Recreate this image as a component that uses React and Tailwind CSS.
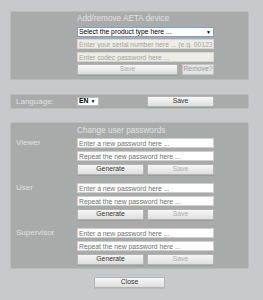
import React from "react";

const font = { fontFamily: '"Liberation Sans", Arial, sans-serif' };

function Btn({ children, disabled, className = "" }) {
  return (
    <div
      className={`flex items-center justify-center h-[11px] border border-[#b4b4b4] rounded-[1px] bg-gradient-to-b from-[#f7f7f7] to-[#dedede] text-[6.8px] leading-none shadow-[0_1px_0_rgba(0,0,0,0.08)] ${
        disabled ? "text-[#adadad]" : "text-[#333]"
      } ${className}`}
    >
      {children}
    </div>
  );
}

function Field({ placeholder, disabled }) {
  return (
    <input
      readOnly
      placeholder={placeholder}
      className={`block w-[137px] h-[10px] px-[1px] text-[6.8px] leading-none outline-none border ${
        disabled
          ? "bg-[#edece5] border-[#d6d5ce] placeholder:text-[#a4a4a0]"
          : "bg-white border-[#cfcfcf] placeholder:text-[#707070]"
      }`}
      style={font}
    />
  );
}

function UserBlock({ label, className = "" }) {
  return (
    <div className={`flex ${className}`}>
      <div className="w-[61px] h-[10px] flex items-center text-[8px] font-normal text-[#e0e0e0]">{label}</div>
      <div className="flex flex-col">
        <Field placeholder="Enter a new password here ..." />
        <div className="mt-[3px]">
          <Field placeholder="Repeat the new password here ..." />
        </div>
        <div className="mt-[3px] flex gap-[3px]">
          <Btn className="w-[67px] h-[10px]">Generate</Btn>
          <Btn className="w-[67px] h-[10px]" disabled>
            Save
          </Btn>
        </div>
      </div>
    </div>
  );
}

export default function App() {
  return (
    <div className="w-[263px] h-[300px] bg-[#c8c9cb] pt-[11px] overflow-hidden" style={font}>
      {/* Panel 1 */}
      <div className="ml-[10px] w-[239px] h-[69px] rounded-[2px] border border-[#b9baba] bg-[#a9abab] pl-[66px]">
        <div className="h-[13px] leading-[13px] text-[8.2px] text-[#e2e2e2]">Add/remove AETA device</div>
        <div className="mt-[2px] w-[137px] h-[10px] bg-white border border-[#7f9fd8] flex items-center justify-between px-[1px] text-[6.8px] text-black leading-none">
          <span>Select the product type here ...</span>
          <span className="text-[5px] mr-[1px]">▼</span>
        </div>
        <div className="mt-[2px]">
          <Field placeholder="Enter your serial number here ... (e.g. 0012345)" disabled />
        </div>
        <div className="mt-[3px]">
          <Field placeholder="Enter codec password here ..." disabled />
        </div>
        <div className="mt-[2px] flex gap-[4px]">
          <Btn className="w-[101px]" disabled>
            Save
          </Btn>
          <div className="w-[32px] h-[11px] flex items-center justify-center border border-[#c4c4c4] bg-[#e4e4e4] text-[6.8px] text-[#9a9a9a] leading-none">
            Remove?
          </div>
        </div>
      </div>

      {/* Panel 2 */}
      <div className="mt-[14px] ml-[10px] w-[239px] h-[15px] rounded-[2px] border border-[#b9baba] bg-[#a9abab] pl-[5px] flex items-center">
        <div className="w-[61px] text-[8px] font-normal text-[#e0e0e0] leading-none">Language:</div>
        <div className="w-[22px] h-[9px] bg-white border border-[#bdbdbd] flex items-center px-[1px] text-[6.8px] text-black leading-none font-bold">
          <span>EN</span>
          <span className="ml-[2px] text-[5px] font-normal">▼</span>
        </div>
        <Btn className="ml-[48px] w-[67px] h-[10px]">Save</Btn>
      </div>

      {/* Panel 3 */}
      <div className="mt-[13px] ml-[10px] w-[239px] h-[147px] rounded-[2px] border border-[#b9baba] bg-[#a9abab] pl-[5px]">
        <div className="ml-[61px] h-[15px] leading-[15px] text-[8.2px] text-[#e2e2e2]">Change user passwords</div>
        <UserBlock label="Viewer" />
        <UserBlock label="User" className="mt-[8px]" />
        <UserBlock label="Supervisor" className="mt-[8px]" />
      </div>

      {/* Close */}
      <div className="ml-[94px] mt-[8px]">
        <Btn className="w-[71px] h-[11px]">Close</Btn>
      </div>
    </div>
  );
}
